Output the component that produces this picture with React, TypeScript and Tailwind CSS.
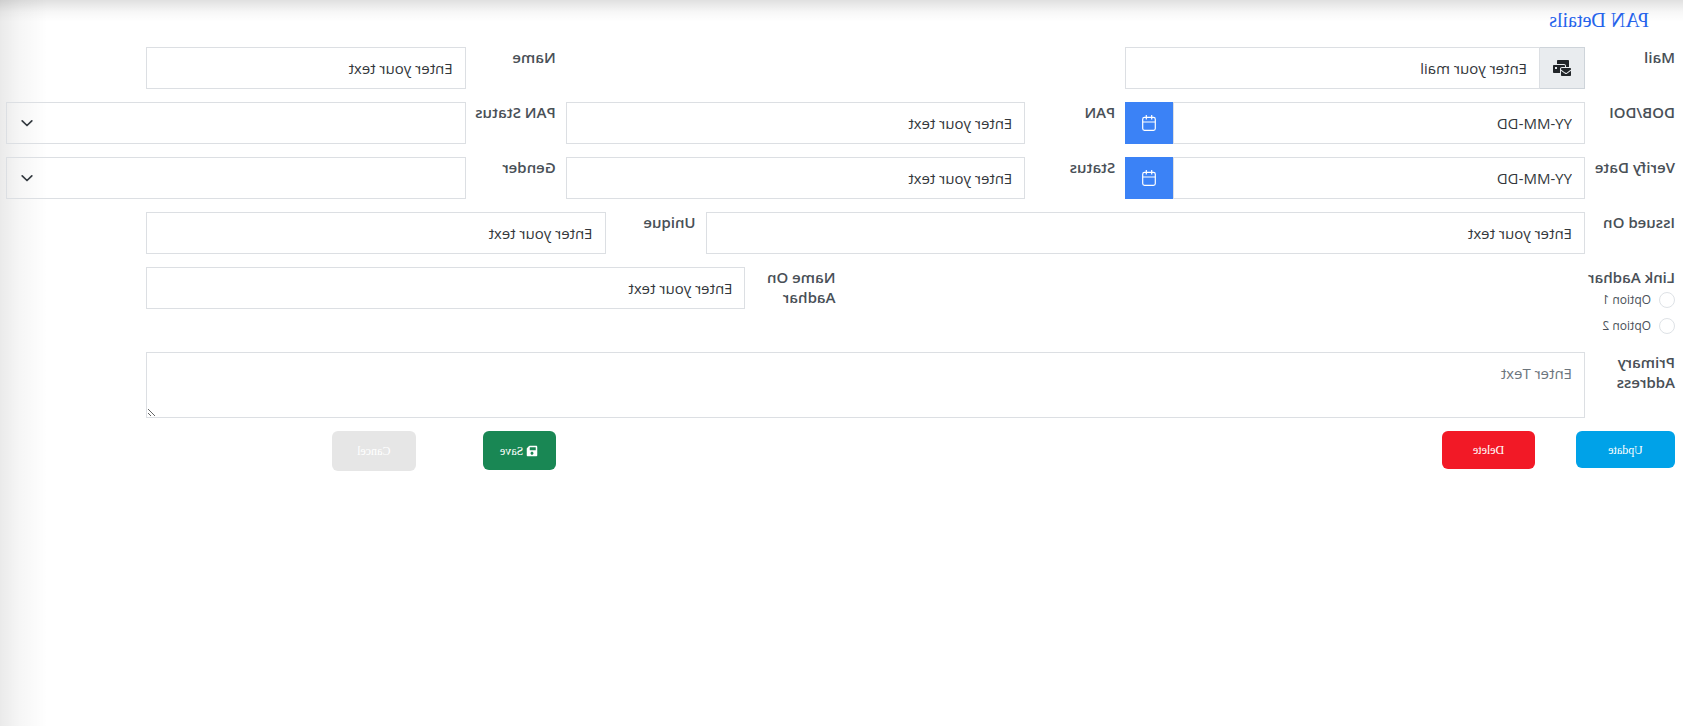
import type { ReactNode } from "react";
import { FaMailBulk, FaSave } from "react-icons/fa";

const box =
  "h-[42px] min-w-0 flex-1 border border-[#dcdfe3] bg-transparent px-3 text-[15px] text-[#212529] placeholder:text-[#33373b] outline-none focus:border-[#3b82f6]";

type FieldProps = {
  id: string;
  label: string;
  className: string;
  children: ReactNode;
};

function Field({ id, label, className, children }: FieldProps) {
  return (
    <div className={`flex items-start ${className}`}>
      <label
        htmlFor={id}
        className="w-[90px] shrink-0 text-[15px] leading-5 font-semibold text-[#495057]"
      >
        {label}
      </label>
      {children}
    </div>
  );
}

function TextBox({ id }: { id: string }) {
  return <input id={id} type="text" placeholder="Enter your text" className={box} />;
}

function DateBox({ id }: { id: string }) {
  return (
    <div className="flex min-w-0 flex-1">
      <input id={id} type="text" placeholder="YY-MM-DD" className={box} />
      <button
        type="button"
        aria-label="Choose date"
        className="flex h-[42px] w-12 items-center justify-center bg-[#3b82f6] text-white"
      >
        <svg width="14" height="16" viewBox="0 0 14 16" fill="none" stroke="currentColor" strokeWidth="1.2">
          <rect x="0.7" y="2.4" width="12.6" height="12.9" rx="1.8" />
          <path d="M4.3 0v4.4M9.7 0v4.4M0.7 7h12.6" />
        </svg>
      </button>
    </div>
  );
}

function SelectBox({ id }: { id: string }) {
  return (
    <div className="relative flex min-w-0 flex-1">
      <select id={id} defaultValue="" className={`${box} appearance-none`}>
        <option value=""></option>
      </select>
      <svg
        className="pointer-events-none absolute top-4 right-[15px] text-[#343a40]"
        width="12"
        height="12"
        viewBox="0 0 12 12"
        fill="none"
        stroke="currentColor"
        strokeWidth="1.7"
        strokeLinecap="round"
        strokeLinejoin="round"
      >
        <path d="M1.2 2.8 6 7.5l4.8-4.7" />
      </svg>
    </div>
  );
}

export default function App() {
  return (
    <div className="min-h-screen -scale-x-100 bg-white bg-[linear-gradient(to_bottom,#0000001f,#00000008_12px,transparent_22px),linear-gradient(to_left,#00000015,#00000009_20px,transparent_48px)] font-['Open_Sans','Noto_Sans',sans-serif]">
      <form className="pr-1.5 pb-4 pl-2" onSubmit={(e) => e.preventDefault()}>
        <h1 className="pt-2 pb-[15px] pl-[26px] font-['Liberation_Serif',serif] text-xl leading-6 text-[#2563eb]">
          PAN Details
        </h1>

        <div className="grid grid-cols-12 gap-x-[10px] gap-y-[13px]">
          <Field id="mail" label="Mail" className="col-span-4">
            <span className="flex h-[42px] w-[45px] items-center justify-center border border-r-0 border-[#ced4da] bg-[#e9ecef] text-[#212529]">
              <FaMailBulk size={18} />
            </span>
            <input id="mail" type="email" placeholder="Enter your mail" className={box} />
          </Field>
          <Field id="name" label="Name" className="col-span-3 col-start-9">
            <TextBox id="name" />
          </Field>

          <Field id="dob" label="DOB/DOI" className="col-span-4 col-start-1">
            <DateBox id="dob" />
          </Field>
          <Field id="pan" label="PAN" className="col-span-4">
            <TextBox id="pan" />
          </Field>
          <Field id="pan-status" label="PAN Status" className="col-span-4">
            <SelectBox id="pan-status" />
          </Field>

          <Field id="verify-date" label="Verify Date" className="col-span-4">
            <DateBox id="verify-date" />
          </Field>
          <Field id="status" label="Status" className="col-span-4">
            <TextBox id="status" />
          </Field>
          <Field id="gender" label="Gender" className="col-span-4">
            <SelectBox id="gender" />
          </Field>

          <Field id="issued-on" label="Issued On" className="col-span-7">
            <TextBox id="issued-on" />
          </Field>
          <Field id="unique" label="Unique" className="col-span-4">
            <TextBox id="unique" />
          </Field>

          <fieldset className="col-span-6 col-start-1 h-[72px]">
            <legend className="text-[15px] leading-5 font-semibold text-[#495057]">Link Aadhar</legend>
            {["Option 1", "Option 2"].map((option) => (
              <label key={option} className="flex h-[26px] items-center gap-2 text-xs text-[#495057]">
                <input
                  type="radio"
                  name="link-aadhar"
                  className="size-4 appearance-none rounded-full border border-[#dee2e6] checked:border-4 checked:border-[#3b82f6]"
                />
                {option}
              </label>
            ))}
          </fieldset>
          <Field id="aadhar-name" label="Name On Aadhar" className="col-span-5">
            <TextBox id="aadhar-name" />
          </Field>

          <Field id="address" label="Primary Address" className="col-span-11 col-start-1">
            <textarea
              id="address"
              placeholder="Enter Text"
              className="h-[66px] min-w-0 flex-1 border border-[#dcdfe3] bg-transparent px-3 py-[9px] text-[15px] text-[#212529] outline-none placeholder:text-[#6c757d] focus:border-[#3b82f6]"
            />
          </Field>

          <div className="col-span-1 col-start-1">
            <button type="button" className="h-[37px] w-[99px] rounded-md bg-[#00a2e8] font-['Liberation_Serif',serif] text-xs text-white">
              Update
            </button>
          </div>
          <div className="col-span-1">
            <button type="button" className="h-[38px] w-[93px] rounded-md bg-[#f21926] font-['Liberation_Serif',serif] text-xs text-white">
              Delete
            </button>
          </div>
          <div className="col-span-1 col-start-9">
            <button
              type="submit"
              className="flex h-[39px] w-[73px] items-center justify-center gap-[3px] rounded-md bg-[#198754] font-['Liberation_Serif',serif] text-xs text-white"
            >
              <FaSave size={12} />
              Save
            </button>
          </div>
          <div className="col-span-1">
            <button type="reset" className="h-10 w-[84px] rounded-md bg-[#e6e6e6] font-['Liberation_Serif',serif] text-xs text-white">
              Cancel
            </button>
          </div>
        </div>
      </form>
    </div>
  );
}
